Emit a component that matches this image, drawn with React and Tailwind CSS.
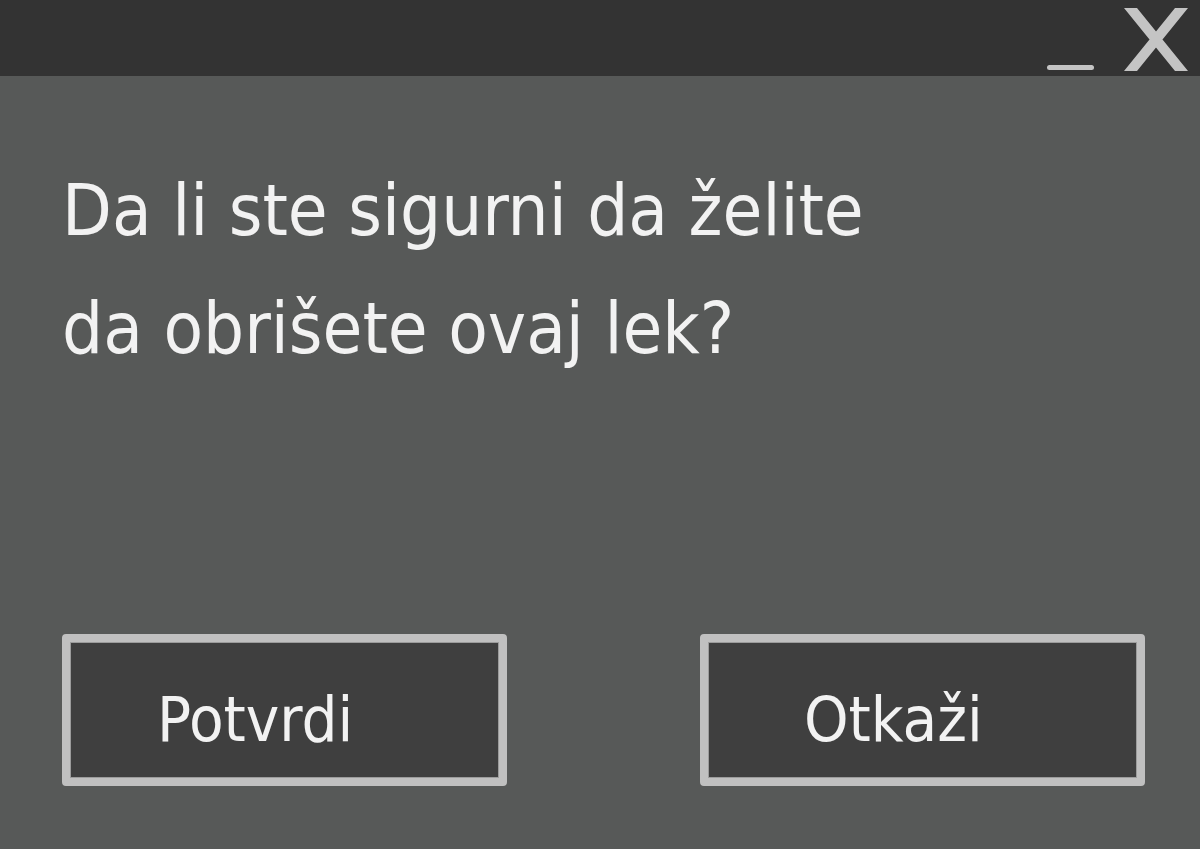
export default function App() {
  return (
    <div
      className="w-[1200px] h-[849px] flex flex-col bg-[#575958] text-[#f2f2f2] overflow-hidden"
      style={{ fontFamily: '"DejaVu Sans Condensed", "DejaVu Sans", sans-serif' }}
    >
      {/* title bar */}
      <div className="h-[76px] shrink-0 bg-[#333333] flex justify-end items-start pr-[12px]">
        <div className="w-[47px] h-[5px] rounded-full bg-[#c4c4c4] mt-[65px] mr-[30px]" />
        <svg width="64" height="63" viewBox="0 0 64 63" className="mt-[8px]">
          <path d="M0 0 H13 L64 63 H51 Z M51 0 H64 L13 63 H0 Z" fill="#c4c4c4" />
        </svg>
      </div>

      {/* message */}
      <div className="pl-[62px] pt-[75px] text-[72px] leading-[118px]">
        <p>Da li ste sigurni da želite</p>
        <p>da obrišete ovaj lek?</p>
      </div>

      {/* buttons */}
      <div className="mt-auto mb-[63px] pl-[62px] flex gap-[193px]">
        <button className="w-[445px] h-[152px] border-[8px] border-[#c0c0c0] rounded-[4px] bg-[#3f3f3f] shadow-[inset_0_0_0_1px_#9c9c9c] text-[63px] text-[#f2f2f2] pl-[87px] pt-[20px] text-left">
          Potvrdi
        </button>
        <button className="w-[445px] h-[152px] border-[8px] border-[#c0c0c0] rounded-[4px] bg-[#3f3f3f] shadow-[inset_0_0_0_1px_#9c9c9c] text-[63px] text-[#f2f2f2] pl-[96px] pt-[20px] text-left">
          Otkaži
        </button>
      </div>
    </div>
  );
}
